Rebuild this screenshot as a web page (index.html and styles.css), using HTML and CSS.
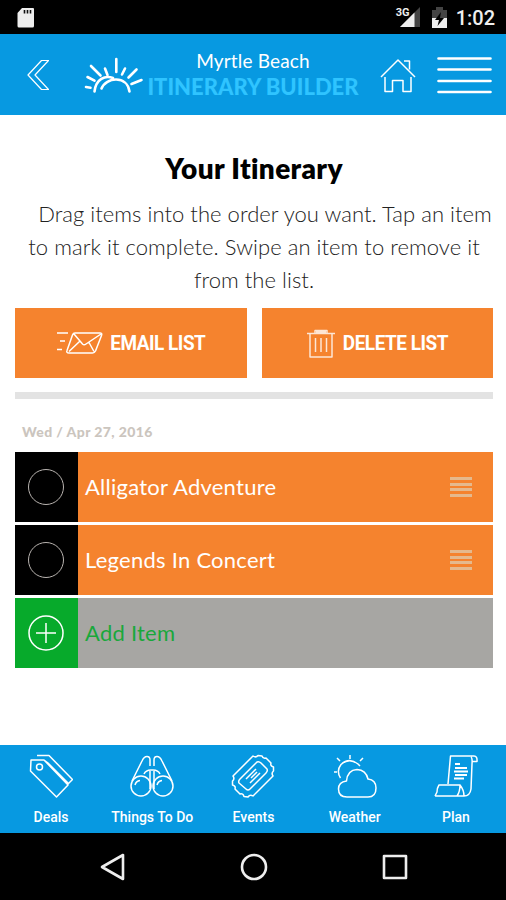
FILE: index.html
```html
<!DOCTYPE html>
<html lang="en">
<head>
    <meta charset="UTF-8">
    <meta name="viewport" content="width=device-width, initial-scale=1.0">
    <title>Your Itinerary</title>
    <link rel="stylesheet" href="styles.css">
</head>
<body>

    <div class="status-bar">
        <svg class="sd-card" width="18" height="22" viewBox="0 0 18 22">
            <path d="M5 1H16Q17 1 17 2V19Q17 20.500 15.500 20.500H2Q.5 20.500 .5 19V6Z" fill="#eee"/>
            <path d="M7.500 3v3.500M10.500 3v3.500M13.500 3v3.500" stroke="#111" stroke-width="1.600"/>
        </svg>
        <div class="status-right">
            <span class="network">3G</span>
            <svg class="signal" width="21" height="21" viewBox="0 0 21 21">
                <path d="M21 0V20H1Z" fill="#444"/>
                <path d="M15.500 5.500V20H1Z" fill="#eee"/>
            </svg>
            <svg class="battery" width="15" height="22" viewBox="0 0 15 22">
                <path d="M0 3H4V0H11V3H15V11H0Z" fill="#444"/>
                <path d="M0 11H15V21H0Z" fill="#eee"/>
                <path d="M9 5L3 13H7L5.500 19L12 11H8Z" fill="#000"/>
            </svg>
            <span class="time">1:02</span>
        </div>
    </div>

    <header>
        <svg class="back" width="22" height="32" viewBox="0 0 22 32">
            <path d="M14.500 1.500H21.500L8 16L21.500 30.500H14.500L1 16Z"/>
        </svg>
        <svg class="sun" width="60" height="38" viewBox="0 0 60 38">
            <path d="M10.500 34.500C12 22 21 18 29 21M17.500 31.500C22 20 43 18 45.500 34.500"/>
            <path d="M7 9L16.500 18.500M21 11.500L23.500 18M32.300 2V15M41 11.500L38 17.500M52.500 12.500L44.500 20.500M57.500 23L47.500 27M3.500 20L10.500 23.700M2 30L6.500 30.700"/>
        </svg>
        <div class="title">
            <span class="place">Myrtle Beach</span>
            <span class="app-name">ITINERARY BUILDER</span>
        </div>
        <svg class="home" width="36" height="36" viewBox="0 0 36 36">
            <path d="M1 19L18 2L35 19M24 3H29.500V11.500M5 19V33.500H12.500V22.500H23V33.500H31V19"/>
        </svg>
        <svg class="menu" width="55" height="40" viewBox="0 0 55 40">
            <path d="M1.500 3.500H53.500M1.500 14.500H53.500M1.500 26H53.500M1.500 37H53.500"/>
        </svg>
    </header>

    <main>
        <h1>Your Itinerary</h1>
        <p class="intro">Drag items into the order you want. Tap an item<br>to mark it complete. Swipe an item to remove it<br>from the list.</p>

        <div class="buttons">
            <button type="button">
                <svg width="48" height="24" viewBox="0 0 48 24">
                    <path d="M19 2H44Q46.500 2 45.500 4.500L39.500 20Q38.500 22 36.500 22H13Q10 22 11 19.500L16.500 4Q17.200 2 19 2ZM18 3L26.500 13Q28 14.500 30 13L45 3M13 20.500L23.500 10.500M38 20.500L33 11.500M1 2H12M4 10H9M1 18.500H6"/>
                </svg>
                <span>EMAIL LIST</span>
            </button>
            <button type="button">
                <svg class="trash" width="30" height="32" viewBox="0 0 30 32">
                    <path d="M1 6.500H29M9 6V3.500H21V6M10 5H20M4 7V30H26V7M9.500 11V25M15 11V25M20.500 11V25"/>
                </svg>
                <span>DELETE LIST</span>
            </button>
        </div>

        <div class="divider"></div>
        <h2>Wed / Apr 27, 2016</h2>

        <ul class="items">
            <li>
                <div class="check"><span class="circle"></span></div>
                <div class="item"><span>Alligator Adventure</span><span class="handle"></span></div>
            </li>
            <li>
                <div class="check"><span class="circle"></span></div>
                <div class="item"><span>Legends In Concert</span><span class="handle"></span></div>
            </li>
            <li class="add">
                <div class="check">
                    <svg width="36" height="36" viewBox="0 0 36 36"><path d="M18 8V28M8 18H28"/><circle cx="18" cy="18" r="17"/></svg>
                </div>
                <div class="item"><span>Add Item</span></div>
            </li>
        </ul>
    </main>

    <nav class="tabs">
        <a>
            <svg width="44" height="44" viewBox="0 0 44 44">
                <path d="M2 6H15L39 31L27.500 43L1.500 17ZM8 1.500H20L43.500 25.500L39 30M15 6L19 9L40 30"/>
                <circle cx="10.500" cy="13" r="3"/>
            </svg>
            <span>Deals</span>
        </a>
        <a>
            <svg width="44" height="44" viewBox="0 0 44 44">
                <circle cx="11" cy="32" r="10"/>
                <circle cx="33" cy="32" r="10"/>
                <path d="M2 27L12 7Q14 2.500 17 2.500Q20 2.500 20 6V12M42 27L32 7Q30 2.500 27 2.500Q24 2.500 24 6V12M20 17V35M24 17V35M14 20Q16 15.500 22 16Q28 15.500 30 20M5 31Q6 27 10 26.500M27 31Q28 27 32 26.500"/>
            </svg>
            <span>Things To Do</span>
        </a>
        <a>
            <svg width="44" height="44" viewBox="0 0 44 44">
                <path d="M22 2Q25 4 27 1.500L31 2Q32 5 35 4L40 9Q39 12 42.500 13V17Q40 19 42 22L22 42Q19 40 17 43L13 42.500Q12 39 9 40L4 35Q5 32 1.500 31V27Q4 25 2 22Z"/>
                <path d="M26 8Q28 7 30 9L36 15Q37 17 35 19L19 35Q17 37 15 35L8 29Q7 27 9 25Z"/>
                <path d="M15 25L25 15M19 29L29 19M20 24L26 18"/>
            </svg>
            <span>Events</span>
        </a>
        <a>
            <svg width="44" height="44" viewBox="0 0 44 44">
                <path d="M14 43Q5.500 43 5.500 35Q5.500 28 13.500 27Q14.500 16 24 15.500Q33 16 35 25Q43 26 43 34Q43 43 35 43ZM7.500 24Q3 17 8 10.500Q16 3 25 10L27 12M17 1V5M4 4L7 7M30 4L27 7M1 18H4"/>
            </svg>
            <span>Weather</span>
        </a>
        <a>
            <svg width="44" height="44" viewBox="0 0 44 44">
                <path d="M14 30L16.500 2H40Q43.500 2 43 7.500H38.500M37 3Q38.500 4 38 10L37 35Q36 42 30 42M1 42H23Q26 38 26 31H5Q3 34 3 38L1 42M26 31Q30 36 30 42H23"/>
                <path d="M21 10H26M21 14H33M20 17.500H34M21 21H33M20 24.500H30" stroke-width="2"/>
            </svg>
            <span>Plan</span>
        </a>
    </nav>

    <div class="android-nav">
        <svg width="28" height="28" viewBox="0 0 28 28"><path d="M24 2V26L3 14Z"/></svg>
        <svg width="28" height="28" viewBox="0 0 28 28"><circle cx="14" cy="14" r="12"/></svg>
        <svg width="28" height="28" viewBox="0 0 28 28"><rect x="3" y="3" width="22" height="22"/></svg>
    </div>

</body>
</html>
```
FILE: styles.css
```css
* {
    box-sizing: border-box;
}
body {
    font-family: Lato, sans-serif;
    font-variant-ligatures: none;
    margin: 0;
    width: 506px;
    height: 900px;
    display: flex;
    flex-direction: column;
    background-color: #fff;
    overflow: hidden;
}
svg {
    display: block;
    flex: none;
    fill: none;
    stroke: #fff;
    stroke-width: 1.5;
    stroke-linejoin: round;
}
.status-bar {
    height: 34px;
    background-color: #000;
    display: flex;
    justify-content: space-between;
    padding: 7px 11px 0 17px;
}
.status-bar svg {
    stroke: none;
}
.status-right {
    display: flex;
    color: #eee;
    font-family: Roboto, sans-serif;
}
.network {
    font-size: 11px;
    line-height: 11px;
    font-weight: 700;
    margin-right: -11px;
    z-index: 1;
}
.battery {
    margin: 0 9px 0 12px;
}
.time {
    font-size: 20px;
    line-height: 23px;
    font-weight: 500;
}
header {
    height: 81px;
    background-color: #0799e1;
    display: flex;
    align-items: flex-start;
    padding: 0 13px 0 27px;
    color: #fff;
}
.back {
    margin-top: 25px;
    stroke-width: 1.2;
}
.sun {
    margin: 23px 0 0 35px;
    stroke-width: 2.6;
    stroke-linecap: round;
}
.title {
    width: 218px;
    padding-top: 15px;
    display: flex;
    flex-direction: column;
    align-items: center;
    white-space: nowrap;
}
.place {
    font-size: 19px;
    line-height: 24px;
    letter-spacing: 0.15px;
}
.app-name {
    color: #2fc4ff;
    font-size: 22px;
    line-height: 28px;
    font-weight: 900;
}
.home {
    margin: 24px 0 0 18px;
}
.menu {
    margin: 21px 0 0 21px;
    stroke-width: 2.6;
    stroke-linecap: round;
}
main {
    height: 630px;
    padding: 0 13px 0 15px;
}
h1 {
    margin: 0;
    padding-top: 35px;
    font-size: 28px;
    line-height: 36px;
    font-weight: 800;
    letter-spacing: 0.35px;
    text-align: center;
}
.intro {
    margin: 11px -12px 0;
    font-size: 22px;
    line-height: 33px;
    font-weight: 300;
    letter-spacing: 0.05px;
    color: #222;
    text-align: center;
    text-indent: 22px;
    white-space: nowrap;
}
.buttons {
    display: flex;
    gap: 15px;
    margin-top: 12px;
}
button {
    flex: 1;
    height: 70px;
    padding: 0 0 1px;
    border: none;
    background-color: #f5832e;
    color: #fff;
    font-family: Roboto, sans-serif;
    font-size: 21px;
    font-weight: 700;
    letter-spacing: -0.5px;
    display: flex;
    align-items: center;
    justify-content: center;
    gap: 6px;
    white-space: nowrap;
}
button span {
    margin: 0 -5px;
    transform: scaleX(0.9);
}
.trash {
    opacity: .8;
}
.divider {
    height: 7px;
    margin-top: 14px;
    background-color: #e3e3e3;
}
h2 {
    margin: 23px 0 0 7px;
    font-size: 14px;
    line-height: 20px;
    font-weight: 900;
    letter-spacing: 0.4px;
    color: #cbc5be;
}
.items {
    list-style: none;
    margin: 10px 0 0;
    padding: 0;
    display: flex;
    flex-direction: column;
    gap: 3px;
}
.items li {
    display: flex;
    height: 70px;
}
.check {
    width: 63px;
    padding-right: 1px;
    background-color: #000;
    display: flex;
    align-items: center;
    justify-content: center;
}
.circle {
    width: 36px;
    height: 36px;
    border: 1.5px solid #b9b4b0;
    border-radius: 50%;
}
.item {
    flex: 1;
    display: flex;
    align-items: center;
    justify-content: space-between;
    padding: 0 21px 0 7px;
    background-color: #f5832e;
    color: #fff;
    font-size: 22px;
    letter-spacing: 0.25px;
}
.item span:first-child {
    padding-bottom: 2px;
}
.handle {
    width: 22px;
    height: 20px;
    background: repeating-linear-gradient(#e5b98d 0 3px, transparent 3px 5.670px);
}
.add .check {
    background-color: #07aa2b;
}
.add .item {
    background-color: #a7a6a3;
    color: #19a83b;
}
.tabs {
    height: 88px;
    background-color: #0799e1;
    display: grid;
    grid-template-columns: repeat(5, 1fr);
}
.tabs a {
    display: flex;
    flex-direction: column;
    align-items: center;
    padding: 9px 0 0 1px;
    color: #fff;
    font-family: Roboto, sans-serif;
    font-size: 14px;
    line-height: 18px;
    font-weight: 500;
}
.tabs span {
    margin-top: 10px;
}
.android-nav {
    height: 67px;
    background-color: #000;
    display: flex;
    justify-content: center;
    gap: 113px;
    padding: 20px 0 0 1px;
}
.android-nav svg {
    stroke: #eee;
    stroke-width: 2.6;
}
```
